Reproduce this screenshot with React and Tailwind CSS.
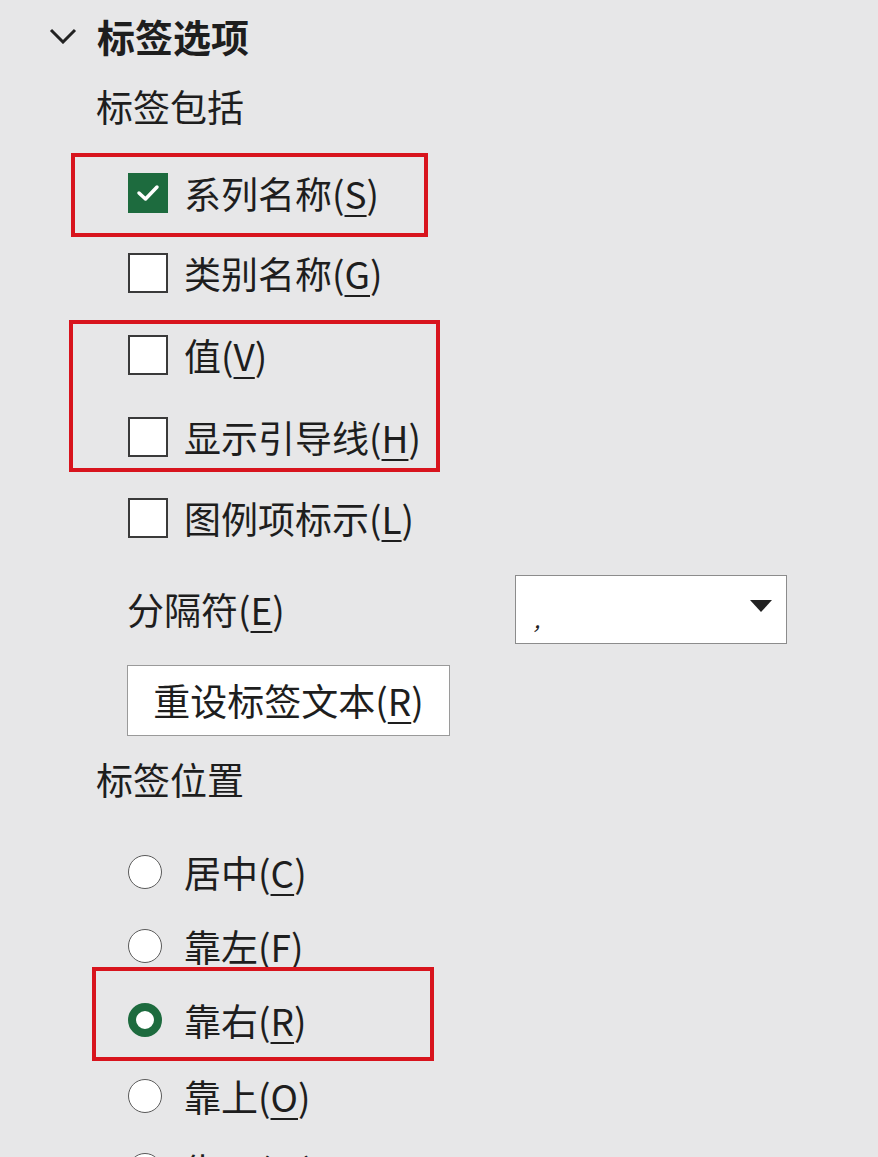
import React from "react";

// 键盘快捷字母，带下划线
const Acc = ({ label, k }) => (
  <span className="whitespace-nowrap">
    {label}(
    <span className="underline decoration-[2px] underline-offset-[6px]">{k}</span>)
  </span>
);

const Check = ({ checked }) =>
  checked ? (
    <div className="w-[40px] h-[40px] bg-[#1d6b3e] flex items-center justify-center shrink-0">
      <svg width="24" height="18" viewBox="0 0 24 18">
        <path d="M3 9 L9.5 15 L21 3" fill="none" stroke="#fff" strokeWidth="3.5" strokeLinecap="round" strokeLinejoin="round" />
      </svg>
    </div>
  ) : (
    <div className="w-[40px] h-[40px] border-[2.5px] border-[#3a3a3a] bg-white shrink-0" />
  );

const Radio = ({ checked }) =>
  checked ? (
    <div className="w-[34px] h-[34px] rounded-full border-[8px] border-[#1d6b3e] bg-white shrink-0" />
  ) : (
    <div className="w-[34px] h-[34px] rounded-full border-[1.5px] border-[#5a5a5a] bg-white shrink-0" />
  );

const App = () => {
  return (
    <div className="relative w-[878px] h-[1157px] overflow-hidden bg-[#e7e7e8] text-[#1e1e1e] text-[37px] leading-none font-['Microsoft_YaHei','Noto_Sans_CJK_SC',sans-serif]">
      {/* 标题 */}
      <div className="h-[72px] flex items-center pl-[49px] gap-[20px]">
        <svg width="28" height="16" viewBox="0 0 28 16">
          <path d="M2 2 L14 14 L26 2" fill="none" stroke="#222" strokeWidth="3" />
        </svg>
        <span className="font-bold text-[38px]">标签选项</span>
      </div>

      <div className="h-[68px] flex items-center pl-[96px]">标签包括</div>

      <div className="mt-[13px] h-[80px] flex items-center pl-[128px] gap-[16px]">
        <Check checked />
        <Acc label="系列名称" k="S" />
      </div>
      <div className="h-[80px] flex items-center pl-[128px] gap-[16px]">
        <Check />
        <Acc label="类别名称" k="G" />
      </div>
      <div className="h-[84px] flex items-center pl-[128px] gap-[16px]">
        <Check />
        <Acc label="值" k="V" />
      </div>
      <div className="h-[80px] flex items-center pl-[128px] gap-[16px]">
        <Check />
        <Acc label="显示引导线" k="H" />
      </div>
      <div className="h-[82px] flex items-center pl-[128px] gap-[16px]">
        <Check />
        <Acc label="图例项标示" k="L" />
      </div>

      {/* 分隔符 */}
      <div className="mt-[16px] h-[69px] flex items-center pl-[127px]">
        <div className="w-[388px]">
          <Acc label="分隔符" k="E" />
        </div>
        <div className="w-[272px] h-[69px] bg-white border-[1.5px] border-[#8c8c8c] flex items-end justify-between pl-[18px] pr-[14px] pb-[14px]">
          <span className="text-[22px] italic">,</span>
          <svg width="22" height="13" viewBox="0 0 22 13" className="mb-[16px]">
            <path d="M0 0 H22 L11 12 Z" fill="#222" />
          </svg>
        </div>
      </div>

      <div className="mt-[21px] pl-[127px]">
        <div className="w-[323px] h-[71px] bg-white border-[1.5px] border-[#9a9a9a] flex items-center justify-center">
          <Acc label="重设标签文本" k="R" />
        </div>
      </div>

      <div className="h-[86px] flex items-center pl-[96px]">标签位置</div>

      <div className="h-[100px] flex items-center pl-[128px] gap-[22px]">
        <Radio />
        <Acc label="居中" k="C" />
      </div>
      <div className="h-[48px] flex items-center pl-[128px] gap-[22px]">
        <Radio />
        <Acc label="靠左" k="F" />
      </div>
      <div className="h-[100px] flex items-center pl-[128px] gap-[22px]">
        <Radio checked />
        <Acc label="靠右" k="R" />
      </div>
      <div className="h-[52px] flex items-center pl-[128px] gap-[22px]">
        <Radio />
        <Acc label="靠上" k="O" />
      </div>
      <div className="h-[96px] flex items-center pl-[128px] gap-[22px]">
        <Radio />
        <Acc label="靠下" k="W" />
      </div>

      {/* 红色标注框 */}
      <div className="absolute left-[71px] top-[153px] w-[357px] h-[84px] border-[4px] border-[#d8141d]" />
      <div className="absolute left-[69px] top-[320px] w-[371px] h-[152px] border-[4px] border-[#d8141d]" />
      <div className="absolute left-[92px] top-[967px] w-[342px] h-[94px] border-[4px] border-[#d8141d]" />
    </div>
  );
};

export default App;
